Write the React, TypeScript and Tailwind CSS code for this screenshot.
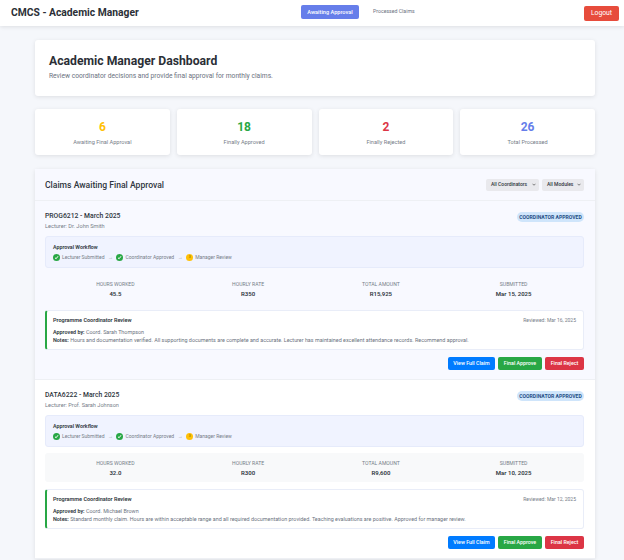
import React from "react";

function Check() {
  return (
    <span className="w-[7px] h-[7px] rounded-full bg-[#28a745] flex items-center justify-center shrink-0">
      <svg width="5" height="5" viewBox="0 0 10 10" fill="none" stroke="white" strokeWidth="2"><path d="M2 5.5 L4.2 7.5 L8 2.5" /></svg>
    </span>
  );
}

function Step({ label, pending }: { label: string; pending?: boolean }) {
  return (
    <span className="flex items-center gap-[2px]">
      {pending ? (
        <span className="w-[7px] h-[7px] rounded-full bg-[#ffc107] flex items-center justify-center shrink-0 text-[3.5px] text-[#7a5c00]">3</span>
      ) : (
        <Check />
      )}
      <span>{label}</span>
    </span>
  );
}

function Workflow() {
  return (
    <div className="h-[32px] bg-[#f0f3ff] border border-[#e6ebfb] rounded-[3px] pl-[7px] pt-[7px]">
      <div className="text-[5.3px] leading-[7px] font-semibold text-[#2f3640]">Approval Workflow</div>
      <div className="flex items-center gap-[3.5px] mt-[3px] text-[5px] leading-[7px] text-[#767d88]">
        <Step label="Lecturer Submitted" />
        <span className="text-[#9aa0a8]">→</span>
        <Step label="Coordinator Approved" />
        <span className="text-[#9aa0a8]">→</span>
        <Step label="Manager Review" pending />
      </div>
    </div>
  );
}

function Cell({ label, value }: { label: string; value: string }) {
  return (
    <div className="text-center pt-[2px]">
      <div className="text-[5.1px] leading-[7px] text-[#767d88] uppercase">{label}</div>
      <div className="text-[6px] leading-[8px] mt-[2px] font-semibold text-[#2f3640]">{value}</div>
    </div>
  );
}

type Claim = {
  title: string; lecturer: string; hours: string; rate: string; total: string; submitted: string;
  reviewed: string; by: string; notes: string; tint: boolean;
};

const claims: Claim[] = [
  {
    title: "PROG6212 - March 2025", lecturer: "Lecturer: Dr. John Smith", hours: "45.5", rate: "R350", total: "R15,925",
    submitted: "Mar 15, 2025", reviewed: "Reviewed: Mar 16, 2025", by: "Coord. Sarah Thompson",
    notes: "Hours and documentation verified. All supporting documents are complete and accurate. Lecturer has maintained excellent attendance records. Recommend approval.",
    tint: true,
  },
  {
    title: "DATA6222 - March 2025", lecturer: "Lecturer: Prof. Sarah Johnson", hours: "32.0", rate: "R300", total: "R9,600",
    submitted: "Mar 10, 2025", reviewed: "Reviewed: Mar 12, 2025", by: "Coord. Michael Brown",
    notes: "Standard monthly claim. Hours are within acceptable range and all required documentation provided. Teaching evaluations are positive. Approved for manager review.",
    tint: false,
  },
];

function ClaimRow({ c }: { c: Claim }) {
  return (
    <div className={`h-[179px] pl-[10px] pr-[11px] pt-[11px] border-b border-[#eef0f4] ${c.tint ? "bg-[#f8f9ff]" : "bg-white"}`}>
      <div className="flex justify-between items-start h-[24px]">
        <div>
          <div className="text-[6.8px] leading-[9px] font-medium text-[#2f3640]">{c.title}</div>
          <div className="text-[5.6px] leading-[8px] mt-[1px] text-[#767d88]">{c.lecturer}</div>
        </div>
        <span className="bg-[#cfe5fb] text-[#1f4e86] text-[5.1px] leading-[10px] font-bold rounded-full w-[67px] text-center uppercase whitespace-nowrap">Coordinator Approved</span>
      </div>
      <Workflow />
      <div className={`grid grid-cols-4 mt-[6px] h-[29px] px-[4px] items-center rounded-[3px] ${c.tint ? "" : "bg-[#f8f9fa]"}`}>
        <Cell label="Hours Worked" value={c.hours} />
        <Cell label="Hourly Rate" value={c.rate} />
        <Cell label="Total Amount" value={c.total} />
        <Cell label="Submitted" value={c.submitted} />
      </div>
      <div className="mt-[7px] h-[40px] bg-white border border-[#e9edf8] border-l-2 border-l-[#28a745] rounded-[3px] pl-[6px] pr-[7px] pt-[6px]">
        <div className="flex justify-between text-[5.5px] leading-[7px]">
          <span className="font-semibold text-[#2f3640]">Programme Coordinator Review</span>
          <span className="text-[#767d88] text-[5px]">{c.reviewed}</span>
        </div>
        <div className="mt-[4px] text-[5.4px] leading-[8px] text-[#6b7280]"><b className="font-semibold text-[#2f3640]">Approved by:</b> {c.by}</div>
        <div className="text-[5.4px] leading-[8px] text-[#6b7280] whitespace-nowrap"><b className="font-semibold text-[#2f3640]">Notes:</b> {c.notes}</div>
      </div>
      <div className="flex justify-end gap-[3px] mt-[7px] text-white text-[5.3px] font-medium">
        <button className="w-[47px] h-[13px] bg-[#007bff] rounded-[2px]">View Full Claim</button>
        <button className="w-[44px] h-[13px] bg-[#28a745] rounded-[2px]">Final Approve</button>
        <button className="w-[39px] h-[13px] bg-[#dc3545] rounded-[2px]">Final Reject</button>
      </div>
    </div>
  );
}

function Stat({ value, label, color }: { value: string; label: string; color: string }) {
  return (
    <div className="bg-white rounded-[3px] shadow-[0_1px_4px_rgba(0,0,0,0.1)] h-[46px] flex flex-col items-center pt-[11px]">
      <div className={`text-[12px] leading-[14px] font-bold ${color}`}>{value}</div>
      <div className="text-[5.6px] leading-[8px] mt-[4px] text-[#767d88]">{label}</div>
    </div>
  );
}

function Select({ label, w }: { label: string; w: string }) {
  return (
    <span className={`${w} h-[12px] bg-[#e9e9ed] rounded-[2px] flex items-center justify-between pl-[5px] pr-[3px] text-[5px] text-[#2f3640] font-medium`}>
      {label}
      <svg width="4" height="3" viewBox="0 0 8 6" fill="none" stroke="#555" strokeWidth="1.5"><path d="M1 1.5 L4 4.5 L7 1.5" /></svg>
    </span>
  );
}

export default function App() {
  return (
    <div className="w-[624px] h-[560px] overflow-hidden bg-[#f5f7fb] font-['Roboto','Noto_Sans',sans-serif]">
      <header className="h-[26px] bg-white shadow-[0_1px_4px_rgba(0,0,0,0.1)] flex items-center pl-[11px] pr-[5px]">
        <div className="text-[10.3px] font-bold text-[#2b2f36] w-[290px]">CMCS - Academic Manager</div>
        <nav className="flex items-center mb-[2px]">
          <span className="w-[58px] h-[14px] text-[5.6px] bg-[#667eea] text-white rounded-[2px] flex items-center justify-center font-medium">Awaiting Approval</span>
          <span className="ml-[14px] text-[5.2px] text-[#6b7280]">Processed Claims</span>
        </nav>
        <button className="ml-auto w-[35px] h-[15px] bg-[#e74c3c] text-white text-[6.8px] rounded-[2px]">Logout</button>
      </header>

      <main className="pl-[35px] pr-[29px] pt-[14px]">
        <section className="h-[56px] bg-white rounded-[3px] shadow-[0_1px_4px_rgba(0,0,0,0.1)] pl-[14px] pt-[13px]">
          <h1 className="text-[12.2px] leading-[16px] font-bold text-[#2b2f36]">Academic Manager Dashboard</h1>
          <p className="text-[6.7px] leading-[9px] mt-[3px] text-[#6b7280]">Review coordinator decisions and provide final approval for monthly claims.</p>
        </section>

        <section className="grid grid-cols-4 gap-[7px] mt-[13px]">
          <Stat value="6" label="Awaiting Final Approval" color="text-[#ffc107]" />
          <Stat value="18" label="Finally Approved" color="text-[#28a745]" />
          <Stat value="2" label="Finally Rejected" color="text-[#dc3545]" />
          <Stat value="26" label="Total Processed" color="text-[#667eea]" />
        </section>

        <section className="mt-[14px] bg-white rounded-t-[3px] shadow-[0_1px_4px_rgba(0,0,0,0.1)]">
          <div className="h-[32px] bg-[#f8f9ff] border-b border-[#eef0f4] flex items-center justify-between pl-[10px] pr-[11px]">
            <h2 className="text-[8.6px] font-medium text-[#2f3640] mt-[2px]">Claims Awaiting Final Approval</h2>
            <div className="flex gap-[3px]">
              <Select label="All Coordinators" w="w-[53px]" />
              <Select label="All Modules" w="w-[42px]" />
            </div>
          </div>
          {claims.map((c) => <ClaimRow key={c.title} c={c} />)}
        </section>
      </main>
    </div>
  );
}
